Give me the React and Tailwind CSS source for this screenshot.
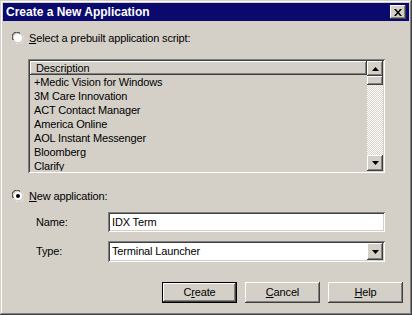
import React from 'react'

const raised =
  'shadow-[inset_-1px_-1px_#404040,inset_1px_1px_#ffffff,inset_-2px_-2px_#808080,inset_2px_2px_#d4d0c8]'
const sunken =
  'shadow-[inset_1px_1px_#808080,inset_-1px_-1px_#ffffff,inset_2px_2px_#404040,inset_-2px_-2px_#d4d0c8]'

const apps = [
  '+Medic Vision for Windows',
  '3M Care Innovation',
  'ACT Contact Manager',
  'America Online',
  'AOL Instant Messenger',
  'Bloomberg',
  'Clarify',
]

function Radio({ checked }) {
  return (
    <svg width="12" height="12" viewBox="0 0 12 12" className="shrink-0">
      <path d="M0.5 8 A5.5 5.5 0 0 1 8 0.5" fill="none" stroke="#808080" />
      <path d="M1.5 8 A4.5 4.5 0 0 1 8 1.5" fill="none" stroke="#404040" />
      <circle cx="6" cy="6" r="4" fill="#ffffff" />
      <path d="M11.5 4 A5.5 5.5 0 0 1 4 11.5" fill="none" stroke="#ffffff" />
      <path d="M10.5 4 A4.5 4.5 0 0 1 4 10.5" fill="none" stroke="#d4d0c8" />
      {checked && <circle cx="6" cy="6" r="2" fill="#000000" />}
    </svg>
  )
}

function Arrow({ up }) {
  return (
    <svg width="7" height="4" viewBox="0 0 7 4">
      <path d={up ? 'M3.5 0 L7 4 L0 4 Z' : 'M0 0 L7 0 L3.5 4 Z'} fill="#000000" />
    </svg>
  )
}

function Button({ children, isDefault }) {
  return (
    <div className={`w-[75px] h-[21px] flex items-center justify-center bg-[#d4d0c8] ${isDefault ? 'border border-black shadow-[inset_-1px_-1px_#404040,inset_1px_1px_#ffffff,inset_-2px_-2px_#808080]' : raised}`}>
      {children}
    </div>
  )
}

export default function App() {
  return (
    <div className="w-[412px] h-[315px] bg-[#d4d0c8] p-[3px] flex flex-col font-['Liberation_Sans',Arial,sans-serif] text-[11px] tracking-[-0.15px] text-black leading-none shadow-[inset_-1px_-1px_#404040,inset_1px_1px_#d4d0c8,inset_-2px_-2px_#808080,inset_2px_2px_#ffffff]">
      <div className="h-[18px] bg-[#0a0a6e] flex items-center justify-between pl-[3px] pr-[3px]">
        <span className="text-white font-bold text-[12px] tracking-normal">Create a New Application</span>
        <div className={`w-[16px] h-[14px] bg-[#d4d0c8] flex items-center justify-center ${raised}`}>
          <svg width="8" height="7" viewBox="0 0 8 7">
            <path d="M0 0 L2 0 L4 2.5 L6 0 L8 0 L5 3.5 L8 7 L6 7 L4 4.5 L2 7 L0 7 L3 3.5 Z" fill="#000000" />
          </svg>
        </div>
      </div>

      <div className="mt-[11px] ml-[9px] flex items-center gap-[5px] h-[12px]">
        <Radio />
        <span><span className="underline underline-offset-1">S</span>elect a prebuilt application script:</span>
      </div>

      <div className={`mt-[15px] ml-[25px] w-[357px] h-[114px] p-[2px] flex bg-[#d4d0c8] ${sunken}`}>
        <div className="flex-1 flex flex-col overflow-hidden">
          <div className={`h-[14px] shrink-0 flex items-center pl-[6px] ${raised}`}>Description</div>
          {apps.map((app) => (
            <div className="h-[14px] shrink-0 flex items-center pl-[4px]" key={app}>{app}</div>
          ))}
        </div>
        <div className="w-[16px] flex flex-col">
          <div className={`h-[15px] flex items-center justify-center ${raised}`}><Arrow up /></div>
          <div className={`h-[9px] ${raised}`} />
          <div className="flex-1 bg-[repeating-conic-gradient(#d4d0c8_0_25%,#ffffff_0_50%)] bg-[length:2px_2px]" />
          <div className={`h-[16px] flex items-center justify-center ${raised}`}><Arrow /></div>
        </div>
      </div>

      <div className="mt-[17px] ml-[9px] flex items-center gap-[5px] h-[12px]">
        <Radio checked />
        <span><span className="underline underline-offset-1">N</span>ew application:</span>
      </div>

      <div className="mt-[10px] ml-[33px] flex items-center">
        <span className="w-[72px]">Name:</span>
        <div className={`w-[277px] h-[20px] bg-white flex items-center pl-[4px] ${sunken}`}>IDX Term</div>
      </div>

      <div className="mt-[9px] ml-[33px] flex items-center">
        <span className="w-[72px]">Type:</span>
        <div className={`w-[277px] h-[21px] bg-white flex items-center justify-between p-[2px] pl-[4px] ${sunken}`}>
          <span>Terminal Launcher</span>
          <div className={`w-[16px] h-[17px] bg-[#d4d0c8] flex items-center justify-center ${raised}`}><Arrow /></div>
        </div>
      </div>

      <div className="mt-[20px] pr-[6px] flex justify-end gap-[8px]">
        <Button isDefault>C<span className="underline underline-offset-1">r</span>eate</Button>
        <Button><span className="underline underline-offset-1">C</span>ancel</Button>
        <Button><span className="underline underline-offset-1">H</span>elp</Button>
      </div>
    </div>
  )
}
